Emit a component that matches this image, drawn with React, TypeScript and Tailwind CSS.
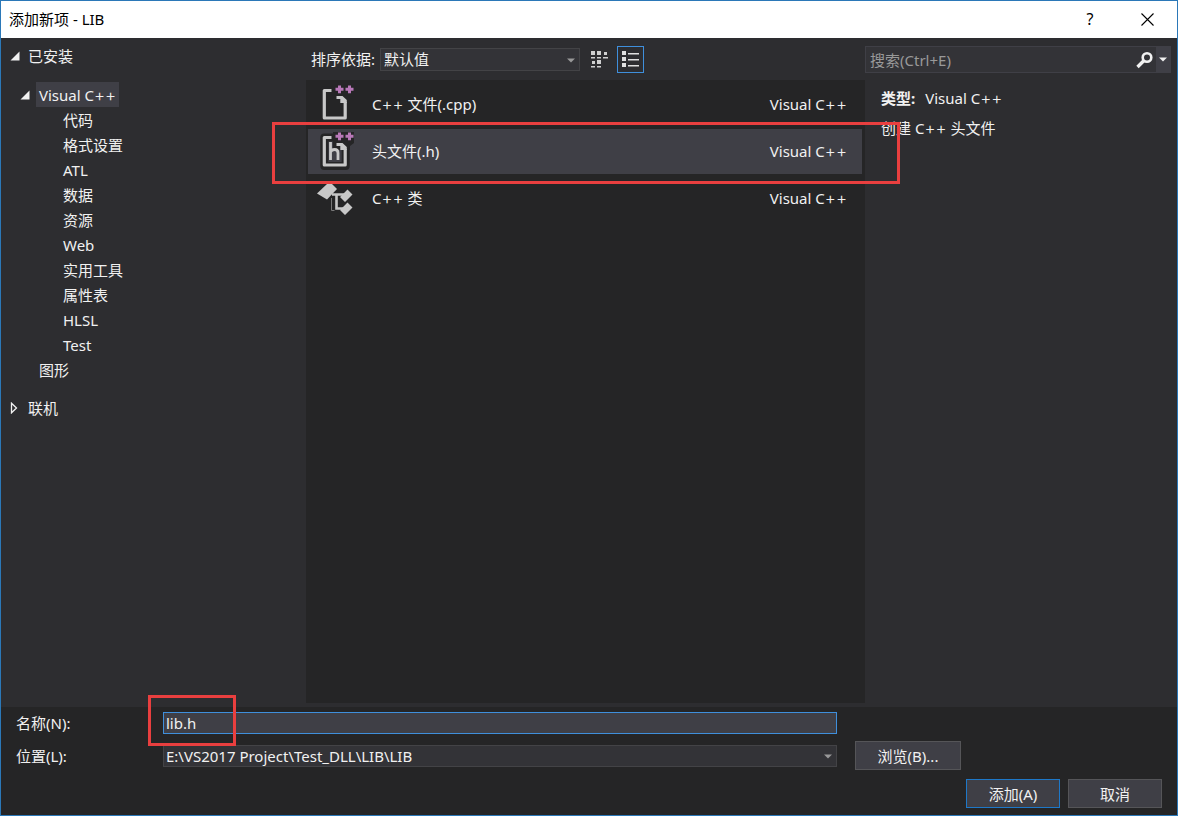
import type { ReactNode } from "react";

const categories = ["代码", "格式设置", "ATL", "数据", "资源", "Web", "实用工具", "属性表", "HLSL", "Test"];

export default function App() {
  return (
    <div className="relative flex min-h-screen flex-col border border-[#2b78b8] bg-[#2d2d30] font-['Noto_Sans','Noto_Sans_CJK_SC',sans-serif] text-[15px] leading-5 text-[#f1f1f1]">
      <header className="flex h-[37px] items-center bg-white pr-[1px] pb-[1px] pl-2 text-black">
        <h1 className="flex-1">添加新项 - LIB</h1>
        <button type="button" aria-label="帮助" className="h-full w-[56px] text-[16px]">
          ?
        </button>
        <button type="button" aria-label="关闭" className="flex h-full w-[58px] items-center justify-center">
          <svg width="13" height="13" viewBox="0 0 13 13" stroke="currentColor" strokeWidth="1.1">
            <path d="M.5.5l12 12M12.500.5l-12 12" />
          </svg>
        </button>
      </header>

      <main className="flex flex-1">
        <CategoryTree />
        <section className="flex flex-1 flex-col pb-1">
          <Toolbar />
          <ul className="flex-1 bg-[#252526] pt-[1px]">
            <Template icon={<CppFileIcon />}>
              C<Plus /> 文件(.cpp)
            </Template>
            <Template icon={<HeaderFileIcon />} selected>
              头文件(.h)
            </Template>
            <Template icon={<ClassIcon />}>
              C<Plus /> 类
            </Template>
          </ul>
        </section>
        <Details />
      </main>

      <Footer />

      <Highlight className="top-[121px] right-[277px] left-[271px] h-[62px]" />
      <Highlight className="bottom-[69px] left-[147px] h-[51px] w-[88px]" />
    </div>
  );
}

// wide, thin plus signs
function Plus() {
  return <span className="font-[Inter] text-[17px] leading-none font-light">++</span>;
}

function Highlight({ className }: { className: string }) {
  return <div className={`pointer-events-none absolute border-3 border-[#e93f3f] ${className}`} />;
}

function CategoryTree() {
  return (
    <nav className="w-[305px] pt-2">
      <button type="button" className="flex h-5 items-center pl-2">
        <OpenArrow />
        <span className="ml-2">已安装</span>
      </button>
      <div className="mt-4 flex h-[25px] items-center pl-[18px]">
        <OpenArrow />
        <button type="button" className="ml-[6px] h-[25px] bg-[#3f3f46] px-[3px]">
          Visual C<Plus />
        </button>
      </div>
      <ul className="pl-[62px]">
        {categories.map((name) => (
          <li key={name} className="h-[25px]">
            <button type="button" className="h-[25px]">{name}</button>
          </li>
        ))}
      </ul>
      <button type="button" className="block h-[25px] pl-[38px]">图形</button>
      <button type="button" className="mt-4 flex h-5 items-center pl-2">
        <svg width="11" height="12" viewBox="0 0 11 12" fill="none" stroke="currentColor" strokeWidth="1.3">
          <path d="M2.500 1.200v9.600L7.500 6z" />
        </svg>
        <span className="ml-2">联机</span>
      </button>
    </nav>
  );
}

function OpenArrow() {
  return (
    <svg width="11" height="10" viewBox="0 0 11 10" fill="currentColor">
      <path d="M10.500.5v9h-9z" />
    </svg>
  );
}

function DropArrow({ className }: { className: string }) {
  return (
    <svg width="8" height="5" viewBox="0 0 8 5" fill="currentColor" className={className}>
      <path d="M0 .5h8L4 4.500z" />
    </svg>
  );
}

function Toolbar() {
  return (
    <div className="flex h-[42px] items-center pl-[5px]">
      <label htmlFor="sort" className="w-[69px]">排序依据:</label>
      <div className="relative">
        <select id="sort" className="block h-[23px] w-[200px] appearance-none border border-[#434346] bg-[#333337] pl-[3px]">
          <option>默认值</option>
        </select>
        <DropArrow className="pointer-events-none absolute top-[10px] right-[5px] text-[#999]" />
      </div>
      <button type="button" aria-label="小图标" className="ml-[6px] flex h-[27px] w-[27px] items-center justify-center">
        <svg width="17" height="19" viewBox="0 0 17 19" fill="#d0d0d0">
          <path d="M0 1h4v4H0zM6 1h4v4H6zM13 2h3v3h-3zM0 7h4v1.500H0zM6 7h4v1.500H6zM12 7h5v1.500h-5zM1 11h3v3H1zM6 10h4v4H6zM0 16h4v1.500H0zM6 16h4v1.500H6z" />
        </svg>
      </button>
      <button type="button" aria-label="列表" className="ml-1 flex h-[27px] w-[27px] items-center justify-center border border-[#3f8fdc]">
        <svg width="19" height="17" viewBox="0 0 19 17" fill="#e0e0e0">
          <path d="M1 0h4v4H1zM1 6h4v4H1zM1 12h4v4H1zM7 2h11v1.400H7zM7 8h11v1.400H7zM7 14h11v1.400H7z" />
        </svg>
      </button>
    </div>
  );
}

function Template({ icon, selected, children }: { icon: ReactNode; selected?: boolean; children: ReactNode }) {
  return (
    <li className="h-[47px] py-[1px] pr-[3px] pl-[2px]">
      <button
        type="button"
        className={`flex h-full w-full items-center pr-[15px] pb-[2px] pl-2 text-left ${selected ? "bg-[#3f3f46]" : ""}`}
      >
        {icon}
        <span className="ml-4 flex-1">{children}</span>
        <span>
          Visual C<Plus />
        </span>
      </button>
    </li>
  );
}

function PageOutline() {
  return (
    <>
      <path d="M17 7.500H8.300v28.500h21.400V20" fill="none" stroke="#252526" strokeWidth="8" strokeLinejoin="round" />
      <path d="M17 2h21v11l-4 3v4H17z" fill="#252526" />
      <path d="M15.500 7.500H8.300v27.500h20.900V19" fill="none" stroke="#c8c8c8" strokeWidth="3.200" strokeLinejoin="round" />
      <path d="M20.500 13h6l4.300 4v3h-6.500v-4h-3.800z" fill="#c8c8c8" />
      <path d="M18 2h20v10H18z" fill="#252526" />
      <path d="M22 2.500h3v2.300h2.500v3H25v2.400h-3V7.800h-2.500v-3H22zM32 2.500h3v2.300h2.500v3H35v2.400h-3V7.800h-2.500v-3H32z" fill="#b878b8" />
    </>
  );
}

function CppFileIcon() {
  return (
    <svg width="40" height="42" viewBox="0 0 40 42">
      <PageOutline />
    </svg>
  );
}

function HeaderFileIcon() {
  return (
    <svg width="40" height="42" viewBox="0 0 40 42">
      <PageOutline />
      <path d="M14.500 12v18M14.500 22c1-3 7.500-4 7.500 1v7" fill="none" stroke="#c8c8c8" strokeWidth="2.800" />
    </svg>
  );
}

function ClassIcon() {
  return (
    <svg width="40" height="42" viewBox="0 0 40 42" fill="#c8c8c8">
      <path d="M1 16.500L11.500 6.500h4l5.500 5.500-10 10.500z" />
      <path d="M16 17.500h12M20.500 17.500v14h9" fill="none" stroke="#c8c8c8" strokeWidth="2.600" />
      <path d="M15.500 21v12.500h3" fill="none" stroke="#777" />
      <path d="M24 20l7.500-7.500 5 5-7.500 7.500zM24 33l7.500-7.500 5 5-7.500 7.500z" />
    </svg>
  );
}

function Details() {
  return (
    <aside className="w-[312px] pt-2 pr-[6px]">
      <div className="flex h-[27px] border border-[#3f3f46] bg-[#333337]">
        <input
          type="search"
          aria-label="搜索"
          placeholder="搜索(Ctrl+E)"
          className="min-w-0 flex-1 bg-transparent pl-1 outline-none placeholder:text-[#999]"
        />
        <button type="button" aria-label="开始搜索" className="flex w-5 items-center">
          <svg width="18" height="18" viewBox="0 0 18 18" fill="none" stroke="#f1f1f1">
            <circle cx="11" cy="6.500" r="4.300" strokeWidth="2.600" />
            <path d="M8 9.500L1.500 16" strokeWidth="3.400" />
          </svg>
        </button>
        <button type="button" aria-label="搜索选项" className="flex w-[14px] items-center justify-center bg-[#3f3f46]">
          <DropArrow className="" />
        </button>
      </div>
      <div className="space-y-[10px] pt-[15px] pl-4">
        <p>
          <strong className="mr-[10px]">类型:</strong>Visual C<Plus />
        </p>
        <p>
          创建 C<Plus /> 头文件
        </p>
      </div>
    </aside>
  );
}

function Footer() {
  return (
    <footer className="bg-[#252526] pt-[5px] pr-[15px] pb-[7px] pl-[15px]">
      <div className="flex h-[22px] items-center">
        <label htmlFor="name" className="w-[147px]">名称(N):</label>
        <input
          id="name"
          defaultValue="lib.h"
          className="h-[22px] min-w-0 flex-1 border border-[#3f8fdc] bg-[#3f3f46] pl-[2px] outline-none"
        />
        <div className="w-[325px]" />
      </div>
      <div className="mt-[7px] flex h-[29px] items-center">
        <label htmlFor="location" className="w-[147px]">位置(L):</label>
        <div className="relative min-w-0 flex-1">
          <select id="location" className="block h-[22px] w-full appearance-none border border-[#434346] bg-[#333337] pl-[2px]">
            <option>E:\VS2017 Project\Test_DLL\LIB\LIB</option>
          </select>
          <DropArrow className="pointer-events-none absolute top-[9px] right-[5px] text-[#999]" />
        </div>
        <div className="w-[325px] pl-[18px]">
          <button type="button" className="block h-[29px] w-[106px] border border-[#555558] bg-[#3f3f46]">浏览(B)...</button>
        </div>
      </div>
      <div className="mt-[9px] flex justify-end gap-2">
        <button type="button" className="h-[29px] w-[94px] border border-[#1e78c8] bg-[#3f3f46]">添加(A)</button>
        <button type="button" className="h-[29px] w-[94px] border border-[#555558] bg-[#3f3f46]">取消</button>
      </div>
    </footer>
  );
}
